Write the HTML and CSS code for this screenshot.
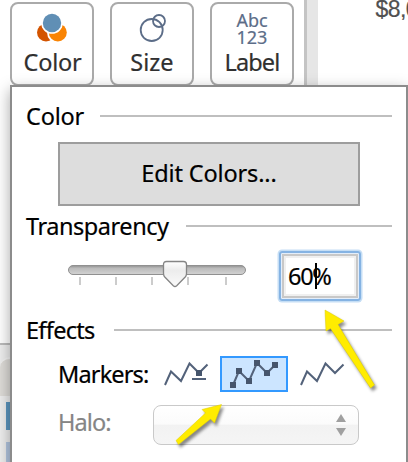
FILE: index.html
```html
<!DOCTYPE html>
<html lang="en">
<head>
<meta charset="utf-8">
<title>Marks card</title>
<link rel="stylesheet" href="styles.css">
</head>
<body>
<div class="workspace">
  <div class="marks">
    <div class="mark">
      <svg class="mark-icon" width="32" height="30" viewBox="0 0 32 30"><circle cx="10" cy="19.500" r="9" fill="#d35400"/><circle cx="21.500" cy="19.500" r="10.500" fill="#fff"/><circle cx="21.800" cy="19.500" r="9" fill="#f98404"/><circle cx="16" cy="10" r="10.800" fill="#fff"/><circle cx="16" cy="10" r="9.200" fill="#608fb5"/></svg>
      <span class="t color-t">Color</span>
    </div>
    <div class="mark">
      <svg class="mark-icon" width="32" height="30" viewBox="0 0 32 30" fill="none" stroke="#5c6d88" stroke-width="1.800"><circle cx="15.700" cy="17" r="11"/><circle cx="23" cy="8" r="6"/></svg>
      <span class="t size-t">Size</span>
    </div>
    <div class="mark">
      <div class="abc"><span>Abc</span><span>123</span></div>
      <span class="t label-t">Label</span>
    </div>
  </div>
  <div class="divider"></div>
  <div class="value">$8,0</div>
</div>
<div class="shelf"><div class="tab"></div><div class="bars"><i class="bar one"></i><i class="bar two"></i></div></div>

<div class="popup">
  <div class="heading h-color"><span class="t color-t">Color</span><i></i></div>
  <button class="edit"><span class="t edit-t">Edit Colors...</span></button>
  <div class="heading h-trans"><span class="t trans-t">Transparency</span><i></i></div>
  <div class="slider-row">
    <svg class="slider" width="182" height="32" viewBox="0 0 182 32">
      <defs>
        <linearGradient id="track" x2="0" y2="1"><stop stop-color="#8e8e8e"/><stop offset=".3" stop-color="#bababa"/><stop offset="1" stop-color="#d3d3d3"/></linearGradient>
        <linearGradient id="thumb" x2="0" y2="1"><stop stop-color="#fff"/><stop offset=".35" stop-color="#ececec"/><stop offset="1" stop-color="#fafafa"/></linearGradient>
      </defs>
      <rect x="2.500" y="6.500" width="177" height="9" rx="4.500" fill="url(#track)" stroke="#909090"/>
      <path d="M14 18v8M50 18v8M86 18v8M122 18v8M160 18v8" stroke="#ccc" stroke-width="2"/>
      <path d="M100.500 2.500h17q3 0 3 3v9q0 2-1.300 3.500l-8.500 8.800q-1.700 1.500-3.400 0l-8.500-8.800q-1.300-1.500-1.300-3.500v-9q0-3 3-3z" fill="url(#thumb)" stroke="#858585" stroke-width="1.300"/>
    </svg>
    <div class="percent"><span class="t pct-t">60%</span><i class="caret"></i></div>
  </div>
  <div class="heading h-effects"><span class="t effects-t">Effects</span><i></i></div>
  <div class="row markers">
    <span class="t markers-t">Markers:</span>
    <svg class="opt" width="68" height="36" viewBox="0 0 68 36" fill="none" stroke="#53627a" stroke-width="2"><path d="M13 29L19 15.500L29 25L37.500 7.500L47 17L55.500 8.500M40 23h14"/><path d="M44 14h6v6h-6z" fill="#46556c" stroke="none"/></svg>
    <svg class="opt selected" width="68" height="36" viewBox="0 0 68 36" fill="none" stroke="#53627a" stroke-width="2"><path d="M13 29L19 15L29 25L37 7L47 17L55 9"/><path d="M10 26h6v6h-6zM16 12h6v6h-6zM26 22h6v6h-6zM34 4h6v6h-6zM44 14h6v6h-6zM52 6h6v6h-6z" fill="#46556c" stroke="none"/></svg>
    <svg class="opt" width="68" height="36" viewBox="0 0 68 36" fill="none" stroke="#53627a" stroke-width="2"><path d="M13 29L19 15.500L29 25L37.500 7.500L47 17L55.500 8.500"/></svg>
  </div>
  <div class="row halo">
    <span class="t halo-t">Halo:</span>
    <div class="select"><svg width="10" height="22" viewBox="0 0 10 22" fill="#a0a0a0"><path d="M0 8L5 0L10 8zM0 14h10L5 22z"/></svg></div>
  </div>
</div>
<svg class="callouts" width="408" height="462" viewBox="0 0 408 462" fill="#ffec00" stroke="#dccb00" stroke-width=".5">
  <path d="M325 310L344 321L338 324.500L374.500 385L370.500 388L330.500 328.500L326 331z"/>
  <path d="M221.500 404.500L214.500 423L210.500 419L178.500 444.500L176 440.500L205.500 413L202 409.500z"/>
</svg>
</body>
</html>
```
FILE: styles.css
```css
* { box-sizing: border-box; }
body {
  margin: 0; width: 408px; height: 462px; overflow: hidden; position: relative;
  background: #fff; color: #000; font-family: "Noto Sans", "Open Sans", sans-serif; font-size: 23.5px;
  -webkit-text-stroke: .2px;
}
.t { display: inline-block; line-height: 32px; white-space: nowrap; }
.workspace { display: flex; height: 345px; background: #fff; border-bottom: 2px solid #bbb; }
.marks { display: flex; gap: 16px; padding: 2px 0 0 10px; width: 304px; flex: none; }
.mark {
  width: 84px; height: 84px; border: 2px solid #aaa; border-radius: 8px; flex: none;
  display: flex; flex-direction: column; align-items: center; color: #303030;
}
.mark-icon { margin-top: 9px; height: 30px; flex: none; }
.mark .t { margin-top: 3px; }
.abc { margin-top: 8px; height: 31px; display: flex; flex-direction: column; color: #5c6d88; font-size: 18px; line-height: 16.5px; }
.divider { width: 14px; border-left: 3px solid #c4c4c4; background: #e6e6e6; flex: none; }
.value { margin: -5px 0 0 57.5px; font: 23px/28px "Liberation Sans", sans-serif; letter-spacing: -.6px; color: #505050; white-space: nowrap; }
.shelf { height: 117px; background: #eee; padding-top: 12px; }
.tab { width: 40px; height: 39px; background: #dedcd8; border-top: 2px solid #f4f4f4; border-radius: 10px 0 0 0; }
.bars { display: flex; flex-direction: column; gap: 12px; padding: 6px 0 0 6px; }
.bar { width: 5px; height: 28px; background: #5c96bf; }
.two { background: #b3c6e0; }
.popup {
  position: absolute; left: 10px; top: 85px; width: 398px; height: 390px;
  background: #fff; border: 2px solid #8c8c8c; box-shadow: 0 5px 14px rgba(0,0,0,.35);
}
.heading { height: 32px; display: flex; align-items: center; padding: 0 14px; }
.heading i { height: 2px; background: #bfbfbf; flex: 1; }
.h-color { margin-top: 13px; }
.h-color i { margin-left: 17px; }
.edit {
  display: block; margin: 10px 0 0 46px; width: 302px; height: 64px; padding: 0;
  background: #ddd; border: 2px solid #9d9d9d; font: inherit; color: #000;
}
.edit .t { position: relative; top: -1px; }
.h-trans { margin-top: 4px; }
.slider-row { height: 52px; margin-top: 8px; padding-left: 54px; display: flex; }
.slider { margin-top: 9px; flex: none; }
.percent {
  margin-left: 31px; width: 82px; height: 50px; margin-top: 1px; flex: none;
  border: 2px solid #85b3e3; border-radius: 3px; box-shadow: 0 0 0 1.500px #c5def5, inset 0 0 0 1px #e4eefa, inset 0 0 0 3px #c8c8c8, inset 0 0 0 5px #f0f0f0;
  display: flex; align-items: center; padding-left: 7px;
}
.caret { width: 2px; height: 26px; background: #000; margin-left: -17px; }
.pct-t { width: 44px; letter-spacing: -1.300px; }
.h-effects { margin-top: 12px; }
.row { display: flex; align-items: center; padding-left: 46px; }
.markers { margin-top: 10px; height: 36px; }
.opt { flex: none; }
.selected { background: #cce5ff; box-shadow: inset 0 0 0 2px #3399ff; }
.halo { margin-top: 13px; height: 40px; color: #858585; }
.halo .t { position: relative; top: -3px; }
.select {
  width: 206px; height: 40px; border: 1.500px solid #c9c9c9; border-radius: 8px; flex: none;
  background: linear-gradient(#fff, #fbfbfb 48%, #f2f2f2 50%, #f5f5f5); display: flex; align-items: center; justify-content: flex-end; padding-right: 12px;
}
.color-t { width: 57px; letter-spacing: -.2px; }
.label-t { letter-spacing: -.9px; }
.edit-t { width: 137px; letter-spacing: -.15px; }
.trans-t { width: 144px; letter-spacing: -.45px; }
.effects-t { width: 70px; letter-spacing: -.7px; }
.markers-t { width: 94px; letter-spacing: -.85px; }
.halo-t { width: 95px; letter-spacing: -.9px; }
.h-trans i { margin-left: 16px; }
.h-effects i { margin-left: 18px; }
.callouts { position: absolute; left: 0; top: 0; filter: drop-shadow(2px 3px 1.500px rgba(0,0,0,.45)); }
```
